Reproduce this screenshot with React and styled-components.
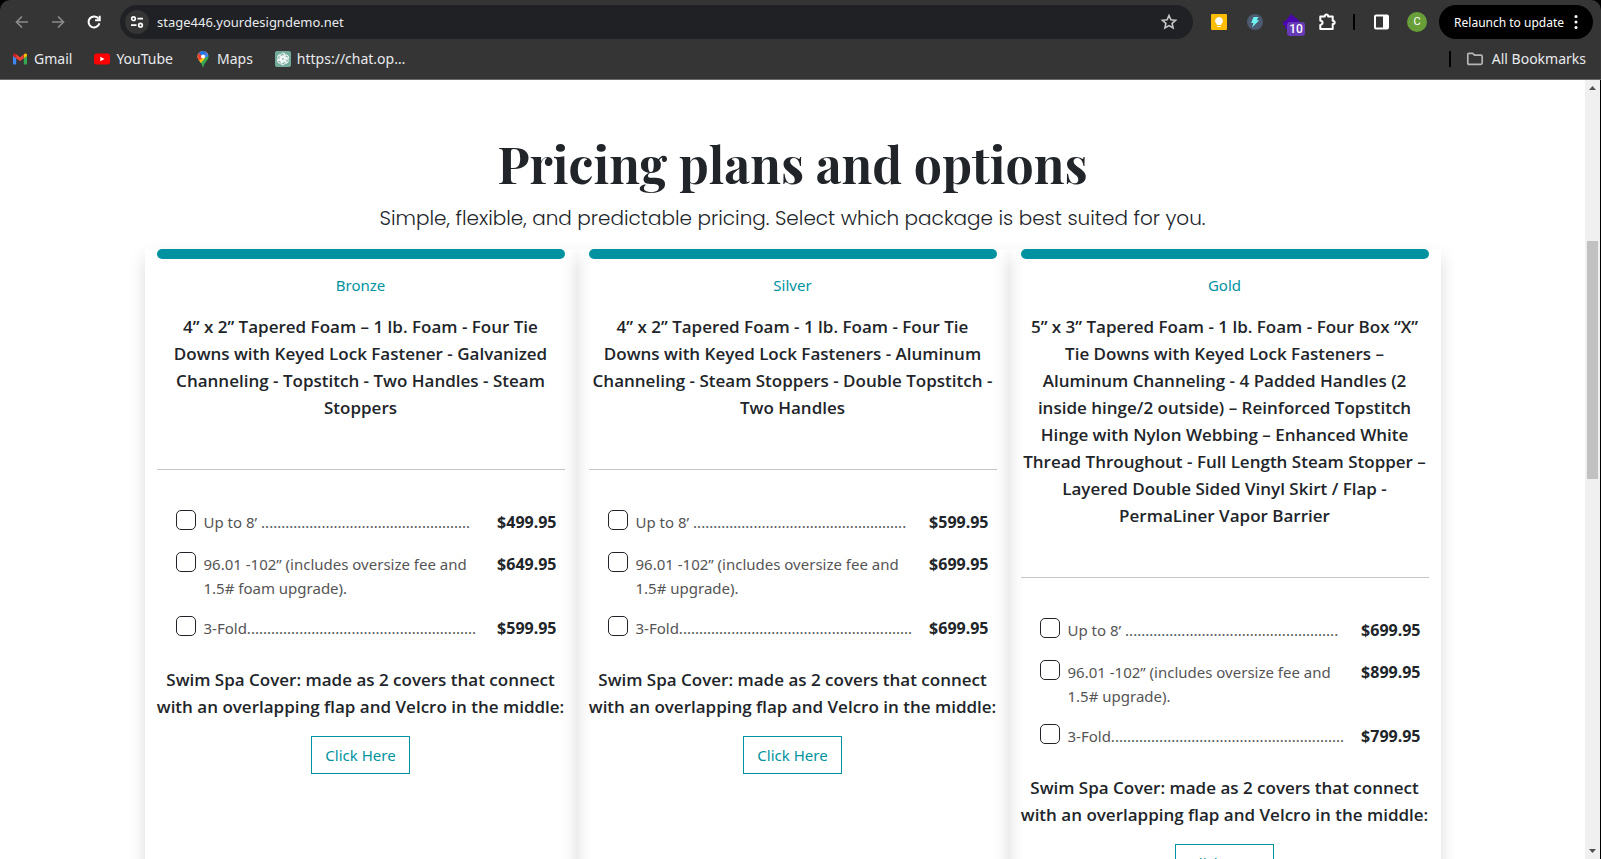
import React, { useId } from 'react';
import styled, { createGlobalStyle } from 'styled-components';

const TEAL = '#0092a0';
const INK = '#212529';
const SANS = '"Noto Sans", "Open Sans", sans-serif';

const GlobalStyle = createGlobalStyle`
  *, *::before, *::after { box-sizing: border-box; }
  html, body { margin: 0; height: 100%; background: #000; }
  body { font-family: ${SANS}; color: ${INK}; overflow: hidden; }
  button { font-family: inherit; cursor: pointer; }
  a { text-decoration: none; color: inherit; }
  svg { display: block; }
`;

/* ---------- browser frame ---------- */

const BrowserWindow = styled.div`
  height: 100vh;
  display: flex;
  flex-direction: column;
`;

const Chrome = styled.header`
  flex: none;
  background: #353535;
  border-radius: 10px 10px 0 0;
  border-bottom: 1px solid #6b6b6b;
  color: #e8eaed;
`;

const Toolbar = styled.div`
  display: flex;
  align-items: center;
  height: 44px;
  padding: 0 8px 0 4px;
`;

const IconButton = styled.button`
  position: relative;
  flex: none;
  display: grid;
  place-items: center;
  width: 36px;
  height: 34px;
  padding: 0;
  border: 0;
  background: none;
  color: ${(p) => p.$color || '#fff'};
`;

const Omnibox = styled.div`
  flex: 1;
  display: flex;
  align-items: center;
  height: 34px;
  margin: 0 8px;
  padding: 0 6px 0 5px;
  border-radius: 17px;
  background: #202124;
`;

const SiteInfo = styled.button`
  flex: none;
  display: grid;
  place-items: center;
  width: 24px;
  height: 24px;
  padding: 0;
  border: 0;
  border-radius: 50%;
  background: #353535;
  color: #fff;
`;

const UrlInput = styled.input`
  flex: 1;
  min-width: 0;
  padding: 0 8px;
  border: 0;
  outline: 0;
  background: none;
  color: #e8eaed;
  font: 13px/20px ${SANS};
`;

const Divider = styled.span`
  flex: none;
  width: 2px;
  height: 16px;
  margin: 0 ${(p) => p.$gap}px;
  background: #000;
`;

const CountBadge = styled.span`
  position: absolute;
  right: 4px;
  bottom: 3px;
  width: 18px;
  height: 14px;
  border-radius: 3px;
  background: #673ab7;
  color: #fff;
  font: 500 12px/14px Roboto, sans-serif;
  text-align: center;
`;

const Avatar = styled.span`
  width: 20px;
  height: 20px;
  border-radius: 50%;
  background: #689f38;
  color: #fff;
  font: 11px/20px Roboto, sans-serif;
  text-align: center;
`;

const RelaunchButton = styled.button`
  flex: none;
  display: flex;
  align-items: center;
  gap: 9px;
  height: 34px;
  margin-left: 4px;
  padding: 0 14px 0 15px;
  border: 0;
  border-radius: 17px;
  background: #000;
  color: #fff;
  font-size: 12px;
  white-space: nowrap;
`;

const BookmarksBar = styled.nav`
  display: flex;
  align-items: center;
  gap: 22px;
  height: 35px;
  padding: 0 15px 6px 12px;
`;

const Bookmark = styled.a`
  display: flex;
  align-items: center;
  gap: ${(p) => p.$gap || 6}px;
  font-size: 14px;
  line-height: 20px;
  white-space: nowrap;
`;

const AllBookmarks = styled.div`
  display: flex;
  align-items: center;
  margin-left: auto;
`;

const Viewport = styled.div`
  flex: 1;
  min-height: 0;
  display: flex;
  padding-right: 1px;
`;

const Scrollbar = styled.div`
  flex: none;
  display: flex;
  flex-direction: column;
  align-items: center;
  width: 15px;
  background: #f0f0f0;
`;

const ScrollArrow = styled.svg`
  flex: none;
  width: 15px;
  height: 15px;
`;

const ScrollSpace = styled.div`
  flex: ${(p) => p.$share} 0 0;
`;

const ScrollThumb = styled.div`
  flex: 238 0 0;
  width: 11px;
  background: #c1c1c1;
`;

/* ---------- pricing page ---------- */

const Page = styled.main`
  flex: 1;
  min-width: 0;
  overflow: hidden;
  background: #fff;
`;

const Container = styled.section`
  max-width: 1296px;
  margin: 0 auto;
  padding-top: 52px;
`;

const Title = styled.h1`
  margin: 0;
  font: 700 50px/64px "Playfair Display", "Liberation Serif", serif;
  text-align: center;
`;

const Subtitle = styled.p`
  margin: 6px 0 15px;
  font: 300 20px/32px Poppins, Inter, sans-serif;
  text-align: center;
`;

const Plans = styled.div`
  display: grid;
  grid-template-columns: repeat(3, 1fr);
`;

const Card = styled.article`
  display: flex;
  flex-direction: column;
  align-items: center;
  min-height: 720px;
  padding: 0 12px;
  box-shadow: 0 8px 16px rgba(0, 0, 0, 0.15);
  text-align: center;
`;

const Accent = styled.div`
  align-self: stretch;
  height: 10px;
  border-radius: 5px;
  background: ${TEAL};
`;

const PlanName = styled.h2`
  margin: 14px 0 16px;
  color: ${TEAL};
  font-size: 15px;
  font-weight: 400;
  line-height: 24px;
`;

const Statement = styled.p`
  margin: 0;
  font: 600 17px/27px "Open Sans", "Noto Sans", sans-serif;
  white-space: pre;
`;

const Rule = styled.hr`
  align-self: stretch;
  margin: 48px 0 40px;
  border: 0;
  border-top: 1px solid #c4c5c6;
`;

const Options = styled.ul`
  align-self: stretch;
  display: flex;
  flex-direction: column;
  gap: 16px;
  margin: 0 0 24px;
  padding: 0 8px 0 19px;
  list-style: none;
  text-align: left;
`;

const OptionRow = styled.li`
  display: flex;
  align-items: flex-start;
  gap: 8px;
  min-height: 26px;
  line-height: 24px;
`;

const CheckBox = styled.input`
  appearance: none;
  flex: none;
  width: 20px;
  height: 20px;
  margin: 0;
  border: 1px solid ${INK};
  border-radius: 5px;
  background: #fff;
  &:checked { background: ${TEAL}; }
`;

const OptionLabel = styled.label`
  flex: 1;
  color: #555;
  font-size: 15px;
`;

const Price = styled.strong`
  font-size: 16px;
  font-weight: 700;
`;

const ActionLink = styled.a`
  margin-top: 16px;
  padding: 6px 13px;
  border: 1px solid ${TEAL};
  color: ${TEAL};
  font-size: 15px;
  line-height: 24px;
`;

/* ---------- icons ---------- */

const Stroke = ({ size = 20, width = 2, children, ...rest }) => (
  <svg width={size} height={size} viewBox="0 0 20 20" fill="none" stroke="currentColor" strokeWidth={width} {...rest}>
    {children}
  </svg>
);

const BackIcon = () => (
  <Stroke width={1.7}><path d="M16 10H4.8M10 4.5 4.5 10l5.5 5.5" /></Stroke>
);
const ForwardIcon = () => (
  <Stroke width={1.7}><path d="M4 10h11.2M10 4.5l5.500 5.500-5.500 5.500" /></Stroke>
);
const ReloadIcon = () => (
  <Stroke><path d="M14.6 6.800A5.500 5.500 0 1 0 15.400 11.200" /><path d="M15.700 3.800v4.500h-4.600" /></Stroke>
);
const TuneIcon = () => (
  <svg width="14" height="14" viewBox="0 0 14 14" fill="none" stroke="currentColor" strokeWidth="1.7">
    <circle cx="3.5" cy="3.7" r="1.8" /><path d="M7.5 3.7H13M1 10.2h5.5" /><circle cx="10.5" cy="10.2" r="1.8" />
  </svg>
);
const StarIcon = () => (
  <Stroke width={1.6}><path d="m10 3.5 1.9 4.3 4.700.5-3.500 3.100 1 4.600-4.100-2.400-4.100 2.400 1-4.600-3.500-3.100 4.700-.5z" /></Stroke>
);
const KeepIcon = () => (
  <svg width="16" height="16" viewBox="0 0 16 16">
    <rect width="16" height="16" rx="1" fill="#fbbc04" />
    <path d="M8 3a4 4 0 0 0-2.300 7.200V11h4.600v-.8A4 4 0 0 0 8 3zM6.200 11.900h3.600v1.200H6.200z" fill="#fff" />
  </svg>
);
const BoltIcon = () => (
  <svg width="16" height="16" viewBox="0 0 16 16">
    <circle cx="8" cy="8" r="8" fill="#4c5b70" />
    <path d="M6.500 3h5L9.700 6.300h2.600L5 13.500l1.500-4.600H4.200z" fill="#6ff3f0" />
  </svg>
);
const HouseIcon = () => (
  <svg width="16" height="16" viewBox="0 0 16 16">
    <path d="M8 0 16 6.500V9h-2v6H2v-4H0V8l3-1.500z" fill="#4a08ac" />
  </svg>
);
const PuzzleIcon = () => (
  <Stroke width={2}>
    <path d="M3.300 4.500h4.500c-.2-2.600 3.600-2.600 3.400 0h4.500v4.300c2.600 0 2.600 3.200 0 3.200v5H3.300v-4c3-.6 3-3.900 0-4.500z" strokeLinejoin="round" />
  </Stroke>
);
const PanelIcon = () => (
  <svg width="15" height="16" viewBox="0 0 15 16">
    <rect x="1" y="1.500" width="13" height="13" rx="1" fill="none" stroke="#fff" strokeWidth="2" />
    <path d="M9 1h5v14H9z" fill="#fff" />
  </svg>
);
const DotsIcon = () => (
  <svg width="6" height="16" viewBox="0 0 6 16" fill="currentColor">
    <circle cx="3" cy="2.500" r="1.500" /><circle cx="3" cy="8" r="1.500" /><circle cx="3" cy="13.500" r="1.500" />
  </svg>
);
const GmailIcon = () => (
  <svg width="16" height="16" viewBox="0 0 16 16">
    <path d="M1 4.500 4.200 7v6.500H2a1 1 0 0 1-1-1z" fill="#4285f4" />
    <path d="M15 4.500 11.800 7v6.500H14a1 1 0 0 0 1-1z" fill="#34a853" />
    <path d="M11.800 3.700V7.300L15 5V4c0-1.400-1.500-2-2.500-1.200z" fill="#fbbc04" />
    <path d="M3.500 2.800 8 6.200l3.800-2.900v4L8 10.200 3.800 7.100z" fill="#ea4335" />
    <path d="M1 5V4c0-1.400 1.500-2 2.500-1.200l.7.500v4z" fill="#c5221f" />
  </svg>
);
const YouTubeIcon = () => (
  <svg width="16" height="16" viewBox="0 0 16 16">
    <rect y="2.500" width="16" height="11" rx="2.800" fill="#f00" />
    <path d="m6.300 5.700 4.200 2.300-4.200 2.300z" fill="#fff" />
  </svg>
);
const MapsIcon = () => {
  const id = useId();
  return (
    <svg width="16" height="16" viewBox="0 0 16 16">
      <clipPath id={id}>
        <path d="M8 0a5.500 5.500 0 0 0-5.500 5.500c0 2 .8 3 2.500 5.200C6.300 12.400 7 13.500 7.300 15c.2 1 .4 1 .7 1s.5 0 .7-1c.3-1.500 1-2.600 2.300-4.300 1.700-2.200 2.500-3.200 2.500-5.200A5.500 5.500 0 0 0 8 0z" />
      </clipPath>
      <g clipPath={`url(#${id})`}>
        <path d="M0 0h16v16H0z" fill="#34a853" />
        <path d="M0 0h16L6 12 0 16z" fill="#fbbc04" />
        <path d="M0 0h16L3 10.500 0 9z" fill="#ea4335" />
        <path d="M3.500 2 8 5.500 12.500 0H4z" fill="#1a73e8" />
        <path d="M8 5.500 12 .8 14 5 9.500 7z" fill="#4285f4" />
      </g>
      <circle cx="8" cy="5.500" r="2" fill="#fff" />
    </svg>
  );
};
const ChatIcon = () => (
  <svg width="16" height="16" viewBox="0 0 16 16">
    <rect width="16" height="16" rx="2" fill="#74aa9c" />
    <g fill="none" stroke="#fff" strokeWidth=".9">
      {[0, 60, 120, 180, 240, 300].map((a) => (
        <path key={a} transform={`rotate(${a} 8 8)`} d="M5.700 9.300V4.600a2.500 2.500 0 0 1 4.500-1.400L6.700 5.200v3.600" />
      ))}
    </g>
  </svg>
);
const FolderIcon = () => (
  <svg width="18" height="16" viewBox="0 0 18 16" fill="none" stroke="#b5b5b5" strokeWidth="1.7">
    <path d="M1.800 3.500c0-.8.400-1.200 1.200-1.200h3.700l1.800 1.900h6.400c.9 0 1.300.4 1.300 1.200v6.700c0 .9-.4 1.300-1.300 1.300H3c-.8 0-1.200-.4-1.200-1.300z" />
  </svg>
);

/* ---------- content ---------- */

const plans = [
  {
    name: 'Bronze',
    features: '4” x 2” Tapered Foam – 1 lb. Foam - Four Tie\nDowns with Keyed Lock Fastener - Galvanized\nChanneling - Topstitch - Two Handles - Steam\nStoppers',
    options: [
      [`Up to 8’ ${'.'.repeat(52)}`, '$499.95'],
      ['96.01 -102” (includes oversize fee and 1.5# foam upgrade).', '$649.95'],
      [`3-Fold${'.'.repeat(57)}`, '$599.95'],
    ],
  },
  {
    name: 'Silver',
    features: '4” x 2” Tapered Foam - 1 lb. Foam - Four Tie\nDowns with Keyed Lock Fasteners - Aluminum\nChanneling - Steam Stoppers - Double Topstitch -\nTwo Handles',
    options: [
      [`Up to 8’ ${'.'.repeat(53)}`, '$599.95'],
      ['96.01 -102” (includes oversize fee and 1.5# upgrade).', '$699.95'],
      [`3-Fold${'.'.repeat(58)}`, '$699.95'],
    ],
  },
  {
    name: 'Gold',
    features: '5” x 3” Tapered Foam - 1 lb. Foam - Four Box “X”\nTie Downs with Keyed Lock Fasteners –\nAluminum Channeling - 4 Padded Handles (2\ninside hinge/2 outside) – Reinforced Topstitch\nHinge with Nylon Webbing – Enhanced White\nThread Throughout - Full Length Steam Stopper –\nLayered Double Sided Vinyl Skirt / Flap -\nPermaLiner Vapor Barrier',
    options: [
      [`Up to 8’ ${'.'.repeat(53)}`, '$699.95'],
      ['96.01 -102” (includes oversize fee and 1.5# upgrade).', '$899.95'],
      [`3-Fold${'.'.repeat(58)}`, '$799.95'],
    ],
  },
];

function Option({ text, price }) {
  const id = useId();
  return (
    <OptionRow>
      <CheckBox type="checkbox" id={id} />
      <OptionLabel htmlFor={id}>{text}</OptionLabel>
      <Price>{price}</Price>
    </OptionRow>
  );
}

function PlanCard({ plan }) {
  return (
    <Card>
      <Accent />
      <PlanName>{plan.name}</PlanName>
      <Statement>{plan.features}</Statement>
      <Rule />
      <Options>
        {plan.options.map(([text, price]) => (
          <Option key={text} text={text} price={price} />
        ))}
      </Options>
      <Statement>{'Swim Spa Cover: made as 2 covers that connect\nwith an overlapping flap and Velcro in the middle:'}</Statement>
      <ActionLink href="#order">Click Here</ActionLink>
    </Card>
  );
}

function BrowserChrome() {
  return (
    <Chrome>
      <Toolbar>
        <IconButton aria-label="Back" $color="#8a8a8a"><BackIcon /></IconButton>
        <IconButton aria-label="Forward" $color="#8a8a8a"><ForwardIcon /></IconButton>
        <IconButton aria-label="Reload"><ReloadIcon /></IconButton>
        <Omnibox>
          <SiteInfo aria-label="Site information"><TuneIcon /></SiteInfo>
          <UrlInput aria-label="Address" defaultValue="stage446.yourdesigndemo.net" />
          <IconButton aria-label="Bookmark this page" $color="#c7c7c7"><StarIcon /></IconButton>
        </Omnibox>
        <IconButton aria-label="Keep"><KeepIcon /></IconButton>
        <IconButton aria-label="Bolt"><BoltIcon /></IconButton>
        <IconButton aria-label="Home tools"><HouseIcon /><CountBadge>10</CountBadge></IconButton>
        <IconButton aria-label="Extensions"><PuzzleIcon /></IconButton>
        <Divider $gap={8} />
        <IconButton aria-label="Side panel"><PanelIcon /></IconButton>
        <IconButton aria-label="Profile"><Avatar>C</Avatar></IconButton>
        <RelaunchButton>Relaunch to update<DotsIcon /></RelaunchButton>
      </Toolbar>
      <BookmarksBar>
        <Bookmark href="#gmail"><GmailIcon />Gmail</Bookmark>
        <Bookmark href="#youtube"><YouTubeIcon />YouTube</Bookmark>
        <Bookmark href="#maps"><MapsIcon />Maps</Bookmark>
        <Bookmark href="#chat"><ChatIcon />https://chat.op…</Bookmark>
        <AllBookmarks>
          <Divider $gap={15} />
          <Bookmark href="#all" $gap={8}><FolderIcon />All Bookmarks</Bookmark>
        </AllBookmarks>
      </BookmarksBar>
    </Chrome>
  );
}

export default function App() {
  return (
    <BrowserWindow>
      <GlobalStyle />
      <BrowserChrome />
      <Viewport>
        <Page>
          <Container>
            <Title>Pricing plans and options</Title>
            <Subtitle>Simple, flexible, and predictable pricing. Select which package is best suited for you.</Subtitle>
            <Plans>
              {plans.map((plan) => <PlanCard key={plan.name} plan={plan} />)}
            </Plans>
          </Container>
        </Page>
        <Scrollbar aria-hidden="true">
          <ScrollArrow viewBox="0 0 15 15"><path d="M4 10h7L7.500 6z" fill="#505050" /></ScrollArrow>
          <ScrollSpace $share={146} />
          <ScrollThumb />
          <ScrollSpace $share={365} />
          <ScrollArrow viewBox="0 0 15 15"><path d="M4 5h7L7.500 9z" fill="#505050" /></ScrollArrow>
        </Scrollbar>
      </Viewport>
    </BrowserWindow>
  );
}
